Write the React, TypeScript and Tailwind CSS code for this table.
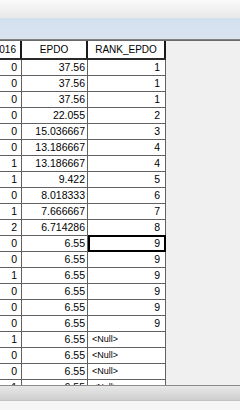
import React from "react";

type Row = [string, string, string];

const rows: Row[] = [
  ["0", "37.56", "1"],
  ["0", "37.56", "1"],
  ["0", "37.56", "1"],
  ["0", "22.055", "2"],
  ["0", "15.036667", "3"],
  ["0", "13.186667", "4"],
  ["1", "13.186667", "4"],
  ["1", "9.422", "5"],
  ["0", "8.018333", "6"],
  ["1", "7.666667", "7"],
  ["2", "6.714286", "8"],
  ["0", "6.55", "9"],
  ["0", "6.55", "9"],
  ["1", "6.55", "9"],
  ["0", "6.55", "9"],
  ["0", "6.55", "9"],
  ["0", "6.55", "9"],
  ["1", "6.55", "<Null>"],
  ["0", "6.55", "<Null>"],
  ["0", "6.55", "<Null>"],
  ["1", "6.55", "<Null>"],
];

export default function App() {
  return (
    <div className="w-[240px] h-[410px] overflow-hidden flex flex-col bg-[#f0f0f0] font-['Liberation_Sans',Arial,sans-serif] text-black">
      <div className="h-[18px] shrink-0 bg-gradient-to-b from-[#fafafa] to-[#e8e8e8]" />
      <div className="h-[21px] shrink-0 bg-gradient-to-b from-[#d3e0ee] to-[#d9e4ef]" />
      <div className="h-[2px] shrink-0 bg-gradient-to-b from-[#8c8c8c] to-[#5e5e5e]" />
      <div className="h-[344px] shrink-0 flex overflow-hidden">
        <div className="w-[166px] shrink-0 flex flex-col bg-white overflow-hidden">
          <div className="h-[19px] shrink-0 flex border-b-2 border-[#2a2a2a] bg-white text-[10px] leading-none">
            <div className="w-[22px] shrink-0 border-r-2 border-[#1a1a1a] flex items-center justify-end pr-[4px] overflow-hidden">
              016
            </div>
            <div className="w-[66px] shrink-0 border-r-2 border-[#1a1a1a] flex items-center justify-center">
              EPDO
            </div>
            <div className="w-[78px] shrink-0 border-r-2 border-[#1a1a1a] flex items-center justify-center">
              RANK_EPDO
            </div>
          </div>
          {rows.map((r, i) => (
            <div
              key={i}
              className="h-[16px] shrink-0 flex border-b border-[#616161] text-[10.5px] leading-none"
            >
              <div className="w-[22px] shrink-0 border-r border-[#616161] flex items-center justify-end pr-[4px]">
                {r[0]}
              </div>
              <div className="w-[66px] shrink-0 border-r border-[#616161] flex items-center justify-end pr-[2px]">
                {r[1]}
              </div>
              <div
                className={
                  r[2] === "<Null>"
                    ? "relative w-[78px] shrink-0 border-r border-[#616161] flex items-center justify-start pl-[4px] text-[9px]"
                    : "relative w-[78px] shrink-0 border-r border-[#616161] flex items-center justify-end pr-[5px]"
                }
              >
                {r[2]}
                {i === 11 && (
                  <span className="absolute left-0 -right-px -top-px -bottom-px border-2 border-black" />
                )}
              </div>
            </div>
          ))}
        </div>
        <div className="flex-1 bg-[#f0f0f0]" />
      </div>
      <div className="h-px shrink-0 bg-[#8a8a8a]" />
      <div className="h-[14px] shrink-0 bg-gradient-to-b from-[#e8e8e8] to-[#cecece]" />
      <div className="h-px shrink-0 bg-[#c2c2c2]" />
      <div className="flex-1 bg-[#f6f6f6]" />
    </div>
  );
}
